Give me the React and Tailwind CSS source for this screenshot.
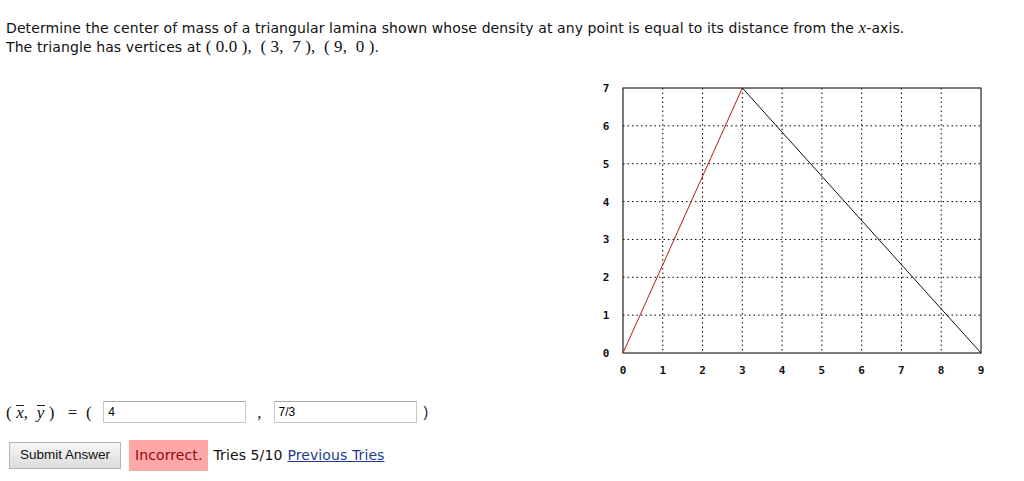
import React from "react";

const X0 = 27;
const Y0 = 275;
const UX = 358 / 9;
const UY = 265 / 7;
const px = (v) => X0 + v * UX;
const py = (v) => Y0 - v * UY;

const Plot = () => {
  const xs = [0, 1, 2, 3, 4, 5, 6, 7, 8, 9];
  const ys = [0, 1, 2, 3, 4, 5, 6, 7];
  return (
    <svg width="400" height="300" viewBox="0 0 400 300" className="block">
      {xs.slice(1, 9).map((v) => (
        <line key={"vx" + v} x1={px(v)} y1={py(7)} x2={px(v)} y2={Y0} stroke="#000" strokeWidth="1" strokeDasharray="1.5 3" />
      ))}
      {ys.slice(1, 7).map((v) => (
        <line key={"hy" + v} x1={X0} y1={py(v)} x2={px(9)} y2={py(v)} stroke="#000" strokeWidth="1" strokeDasharray="1.5 3" />
      ))}
      <rect x={X0} y={py(7)} width={px(9) - X0} height={Y0 - py(7)} fill="none" stroke="#222" strokeWidth="1.2" />
      <line x1={px(0)} y1={py(0)} x2={px(3)} y2={py(7)} stroke="#b01c1c" strokeWidth="1" />
      <line x1={px(3)} y1={py(7)} x2={px(9)} y2={py(0)} stroke="#111" strokeWidth="1" />
      {ys.map((v) => (
        <text key={"ly" + v} x="10" y={py(v) + 4} textAnchor="middle" fontFamily="'DejaVu Sans Mono', monospace" fontWeight="bold" fontSize="11" fill="#111">
          {v}
        </text>
      ))}
      {xs.map((v) => (
        <text key={"lx" + v} x={px(v)} y="296" textAnchor="middle" fontFamily="'DejaVu Sans Mono', monospace" fontWeight="bold" fontSize="11" fill="#111">
          {v}
        </text>
      ))}
    </svg>
  );
};

const M = ({ children, className = "" }) => (
  <span className={"font-['Liberation_Serif','DejaVu_Serif',serif] text-[17px] leading-none " + className}>{children}</span>
);

const Bar = ({ children }) => (
  <span className="inline-block italic border-t border-[#222] leading-[12px] pt-[1px]">{children}</span>
);

export default function App() {
  return (
    <div className="bg-white w-[1024px] h-[481px] overflow-hidden font-['DejaVu_Sans','Verdana',sans-serif] text-[14px] tracking-[0.1px] text-[#111] pt-[19px] pl-[6px]">
      <p className="leading-[19px]">
        Determine the center of mass of a triangular lamina shown whose density at any point is equal to its distance from the{" "}
        <M className="italic">x</M>-axis.
      </p>
      <p className="leading-[19px]">
        The triangle has vertices at{" "}
        <M className="whitespace-pre">{"( 0.0 ),  ( 3,  7 ),  ( 9,  0 )"}</M>.
      </p>
      <div className="pl-[590px] pt-[21px]">
        <Plot />
      </div>
      <div className="flex items-center h-[24px] mt-[22px]">
        <M className="whitespace-pre flex items-center">
          {"( "}
          <Bar>x</Bar>
          {",  "}
          <Bar>y</Bar>
          {" )   =  ( "}
        </M>
        <input
          readOnly
          value="4"
          className="ml-[7px] w-[143px] h-[22px] border border-[#c8c8c8] border-t-[#a8a8a8] px-[4px] text-[12px] tracking-normal font-['Liberation_Sans',Arial,sans-serif] text-[#000] outline-none"
        />
        <M className="ml-[11px] mr-[12px]">,</M>
        <input
          readOnly
          value="7/3"
          className="w-[143px] h-[22px] border border-[#c8c8c8] border-t-[#a8a8a8] px-[4px] text-[12px] tracking-normal font-['Liberation_Sans',Arial,sans-serif] text-[#000] outline-none"
        />
        <span className="ml-[7px] font-['Liberation_Sans',Arial,sans-serif] text-[14px]">)</span>
      </div>
      <div className="flex items-center mt-[16px]">
        <button className="ml-[3px] w-[112px] h-[27px] border border-[#b5b5b5] bg-gradient-to-b from-[#f6f6f6] to-[#dcdcdc] font-['Liberation_Sans',Arial,sans-serif] text-[13.5px] tracking-normal text-[#111]">
          Submit Answer
        </button>
        <span className="ml-[8px] h-[31px] px-[6px] flex items-center bg-[#ffa7a7] text-[#8b0a0a]">Incorrect.</span>
        <span className="ml-[5px]">Tries 5/10</span>
        <a className="ml-[5px] text-[#1a3d8f] underline" href="#">
          Previous Tries
        </a>
      </div>
    </div>
  );
}
